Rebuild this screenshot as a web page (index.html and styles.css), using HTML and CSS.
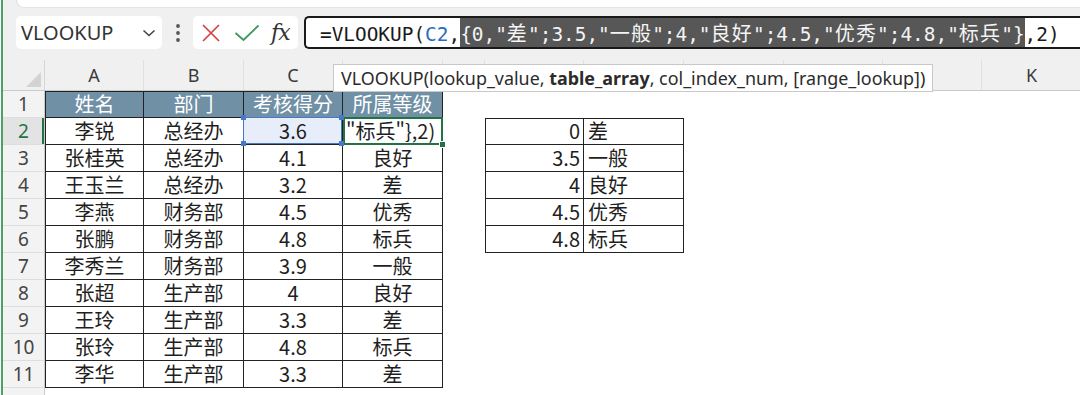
FILE: index.html
```html
<!DOCTYPE html>
<html lang="zh-CN">
<head>
    <meta charset="UTF-8">
    <title>VLOOKUP 常量数组</title>
    <link rel="stylesheet" href="styles.css">
</head>
<body>
<div class="app">
    <div class="ribbon-edge"></div>

    <div class="formula-row">
        <div class="name-box">
            <span>VLOOKUP</span>
            <svg width="14" height="10" viewBox="0 0 14 10"><polyline points="1.5,2.5 7,7.5 12.5,2.5" fill="none" stroke="#444" stroke-width="1.6"/></svg>
        </div>
        <div class="dots">
            <svg width="6" height="20" viewBox="0 0 6 20"><circle cx="3" cy="3" r="1.9" fill="#555"/><circle cx="3" cy="10" r="1.9" fill="#555"/><circle cx="3" cy="17" r="1.9" fill="#555"/></svg>
        </div>
        <div class="fx-box">
            <svg class="cancel" width="20" height="20" viewBox="0 0 20 20"><path d="M2 2 L18 18 M18 2 L2 18" stroke="#d9413f" stroke-width="1.7" fill="none"/></svg>
            <svg class="enter" width="26" height="18" viewBox="0 0 26 18"><polyline points="1.5,9 9.5,16 24.5,1.5" fill="none" stroke="#3a9a5c" stroke-width="1.8"/></svg>
            <span class="fx">fx</span>
        </div>
        <div class="formula-input">
            <span class="part">=VLOOKUP(<span class="ref-txt">C2</span>,</span><span class="part sel">{0,"<span class="cjk">差</span>";3.5,"<span class="cjk">一般</span>";4,"<span class="cjk">良好</span>";4.5,"<span class="cjk">优秀</span>";4.8,"<span class="cjk">标兵</span>"}</span><span class="part">,2)</span>
        </div>
    </div>

    <div class="sheet">
        <!-- D a J ficam escondidas pela dica -->
        <div class="row col-head">
            <div class="corner"></div>
            <div>A</div><div>B</div><div>C</div><div></div><div></div><div></div>
            <div></div><div></div><div></div><div></div><div>K</div>
        </div>

        <div class="row">
            <div class="rh">1</div>
            <div class="t h first">姓名</div><div class="t h">部门</div><div class="t h">考核得分</div><div class="t h">所属等级</div>
        </div>
        <div class="row">
            <div class="rh sel">2</div>
            <div class="t first">李锐</div><div class="t">总经办</div>
            <div class="t ref">3.6<i class="hdl tl"></i><i class="hdl tr"></i><i class="hdl bl"></i><i class="hdl br"></i></div>
            <div class="t act">"标兵"},2)<i class="fill"></i></div>
            <div></div>
            <div class="t num first top">0</div><div class="t txt top">差</div>
        </div>
        <div class="row">
            <div class="rh">3</div>
            <div class="t first">张桂英</div><div class="t">总经办</div><div class="t">4.1</div><div class="t">良好</div>
            <div></div>
            <div class="t num first">3.5</div><div class="t txt">一般</div>
        </div>
        <div class="row">
            <div class="rh">4</div>
            <div class="t first">王玉兰</div><div class="t">总经办</div><div class="t">3.2</div><div class="t">差</div>
            <div></div>
            <div class="t num first">4</div><div class="t txt">良好</div>
        </div>
        <div class="row">
            <div class="rh">5</div>
            <div class="t first">李燕</div><div class="t">财务部</div><div class="t">4.5</div><div class="t">优秀</div>
            <div></div>
            <div class="t num first">4.5</div><div class="t txt">优秀</div>
        </div>
        <div class="row">
            <div class="rh">6</div>
            <div class="t first">张鹏</div><div class="t">财务部</div><div class="t">4.8</div><div class="t">标兵</div>
            <div></div>
            <div class="t num first">4.8</div><div class="t txt">标兵</div>
        </div>
        <div class="row">
            <div class="rh">7</div>
            <div class="t first">李秀兰</div><div class="t">财务部</div><div class="t">3.9</div><div class="t">一般</div>
        </div>
        <div class="row">
            <div class="rh">8</div>
            <div class="t first">张超</div><div class="t">生产部</div><div class="t">4</div><div class="t">良好</div>
        </div>
        <div class="row">
            <div class="rh">9</div>
            <div class="t first">王玲</div><div class="t">生产部</div><div class="t">3.3</div><div class="t">差</div>
        </div>
        <div class="row">
            <div class="rh">10</div>
            <div class="t first">张玲</div><div class="t">生产部</div><div class="t">4.8</div><div class="t">标兵</div>
        </div>
        <div class="row">
            <div class="rh">11</div>
            <div class="t first">李华</div><div class="t">生产部</div><div class="t">3.3</div><div class="t">差</div>
        </div>
        <div class="row last">
            <div class="rh"></div>
        </div>

        <!-- dica de argumentos da função -->
        <div class="tooltip">VLOOKUP(lookup_value, <b>table_array</b>, col_index_num, [range_lookup])</div>
    </div>
</div>
</body>
</html>
```

FILE: styles.css
```css
* { box-sizing: border-box; margin: 0; padding: 0; }

body {
    width: 1080px;
    height: 395px;
    overflow: hidden;
    background: #fff;
    font-family: "Noto Sans", "Noto Sans CJK SC", sans-serif;
    color: #222;
}
.app {
    margin-left: 1px;
    border-left: 2px solid #4aa264;
    height: 395px;
    overflow: hidden;
    background: #f0f0f0;
}
.ribbon-edge {
    height: 8px;
    margin-left: 13px;
    background: #fff;
    border-left: 1px solid #dcdcdc;
    border-bottom: 1px solid #e4e4e4;
    border-radius: 0 0 0 8px;
}

/* barra de fórmulas */
.formula-row {
    display: flex;
    align-items: center;
    height: 52px;
    padding: 4px 0 7px 13px;
}
.name-box {
    width: 146px; height: 33px;
    background: #fff; border-radius: 5px;
    display: flex; align-items: center; justify-content: space-between;
    padding: 0 6px 0 5px;
    font-size: 20px; color: #333;
}
.dots { width: 31px; display: flex; justify-content: center; }
.fx-box {
    width: 105px; height: 33px;
    background: #fff; border-radius: 5px;
    display: flex; align-items: center;
    padding-left: 8px;
}
.fx-box .enter { margin-left: 13px; }
.fx-box .fx {
    margin-left: 11px;
    font-family: "DejaVu Serif", serif;
    font-style: italic;
    font-size: 22px;
    color: #333;
    letter-spacing: -1px;
}
.formula-input {
    flex: 1;
    margin-left: 6px;
    margin-right: -20px;
    height: 33px;
    border: 2px solid #1a1a1a;
    border-right: none;
    border-radius: 5px 0 0 5px;
    background: #fff;
    padding-left: 14px;
    white-space: nowrap;
    overflow: hidden;
    font-family: "DejaVu Sans Mono", monospace;
    font-size: 19.4px;
    color: #1a1a1a;
}
.formula-input .part { display: inline-block; line-height: 29px; height: 29px; }
.formula-input .sel { background: #575757; color: #f4f4f4; }
.formula-input .ref-txt { color: #2b6dbd; }
.formula-input .cjk { font-family: "Noto Sans CJK SC", sans-serif; font-size: 20px; letter-spacing: 1.2px; }

/* planilha */
.sheet { position: relative; background: #fff; }
.row {
    display: grid;
    grid-template-columns: 42px 99px 100px 99px 100px 42px 99px 100px 100px 99px 99px 100px;
    height: 27px;
}
.col-head {
    height: 31px;
    background: #f0f0f0;
    border-bottom: 1px solid #cacaca;
}
.col-head div {
    text-align: center;
    line-height: 30px;
    font-size: 18px;
    color: #3a3a3a;
    border-right: 1px solid #e0e0e0;
}
.col-head .corner { position: relative; border-right: 1px solid #d6d6d6; }
.col-head .corner::after {
    content: "";
    position: absolute;
    right: 3px; bottom: 3px;
    border-left: 15px solid transparent;
    border-bottom: 15px solid #d3d3d3;
}
.rh {
    background: #f3f3f3;
    border-right: 1px solid #cacaca;
    border-bottom: 1px solid #dedede;
    text-align: center;
    font-size: 19px;
    line-height: 26px;
    color: #444;
}
.rh.sel { color: #217346; background: #e3e3e3; box-shadow: inset -2px 0 #217346; }

.t {
    border-right: 1px solid #222;
    border-bottom: 1px solid #222;
    text-align: center;
    font-family: "Noto Sans CJK SC", sans-serif;
    font-size: 20px;
    line-height: 25px;
    color: #1f1f1f;
    white-space: nowrap;
}
.t.first { border-left: 1px solid #222; }
.t.top { box-shadow: inset 0 1px #222; }
.t.h { background: #6f90a5; color: #fff; box-shadow: inset 0 1px #222; }
.t.num { text-align: right; padding-right: 3px; }
.t.txt { text-align: left; padding-left: 4px; }

/* célula referenciada C2 */
.t.ref { position: relative; background: #e8eef9; }
.t.ref::after {
    content: "";
    position: absolute;
    left: -1px; top: -1px; right: 0; bottom: 0;
    border: 1px solid #4a78c8;
}
.hdl { position: absolute; width: 5px; height: 5px; background: #4a78c8; z-index: 2; }
.hdl.tl { left: -3px; top: -3px; }
.hdl.tr { right: -2px; top: -3px; }
.hdl.bl { left: -3px; bottom: -2px; }
.hdl.br { right: -2px; bottom: -2px; }

/* célula ativa D2 */
.t.act { position: relative; z-index: 1; text-align: left; padding-left: 3px; }
.t.act::after {
    content: "";
    position: absolute;
    left: 0; top: -1px; right: -1px; bottom: -1px;
    border: 2px solid #217346;
}
.fill {
    position: absolute;
    right: -4px; bottom: -4px;
    width: 7px; height: 7px;
    background: #217346;
    border: 1px solid #fff;
    z-index: 2;
}

.tooltip {
    position: absolute;
    left: 330px; top: 4px;
    height: 28px;
    padding: 0 7px;
    background: #fff;
    border: 1px solid #c8c8c8;
    font-size: 17.9px;
    line-height: 26px;
    color: #2b2b2b;
    white-space: nowrap;
}
.tooltip b { font-weight: bold; }
```
